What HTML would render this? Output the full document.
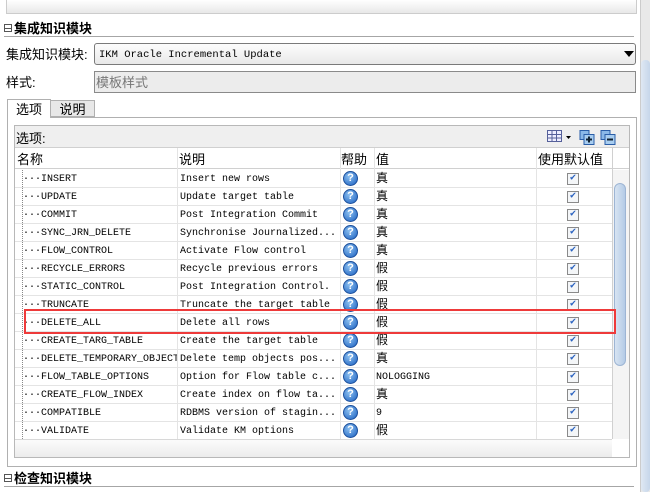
<!DOCTYPE html>
<html><head><meta charset="utf-8"><style>
*{box-sizing:border-box;margin:0;padding:0}
body{width:650px;height:492px;overflow:hidden;background:#fff;position:relative;font-family:"Liberation Sans","Noto Sans CJK SC",sans-serif;font-size:12px;color:#000;line-height:1.15}
.a{position:absolute}
.m{font-family:"Liberation Mono","Noto Sans CJK SC",monospace;font-size:10px}
.row{position:absolute;left:15px;width:597px;height:18px;border-bottom:1px solid #e4e4e4}
.row span{position:absolute;top:4px;white-space:nowrap;line-height:11px}
.row span.c{font-size:12px;top:2px;line-height:14px}
.q{position:absolute;left:328px;top:1px;width:15px;height:15px;border-radius:50%;background:radial-gradient(circle at 40% 35%,#8cc0f0,#1a5fc0);border:1px solid #1b4f9c;color:#fff;font:bold 11px "Liberation Sans",sans-serif;text-align:center;line-height:13px}
.cb{position:absolute;left:552px;top:3px;width:12px;height:12px;border:1px solid #8a8a8a;background:#f4f6f8;color:#2a62c0;font-size:10px;line-height:10px;text-align:center}
.vl{position:absolute;top:148px;height:291px;border-left:1px solid #e4e4e4}
.h{line-height:15px;font-size:13px}
</style></head><body>
<div class="a" style="left:6px;top:0;width:631px;height:14px;background:linear-gradient(#fff,#e8e8e8);border:1px solid #ccc;border-top:none"></div>
<div class="a" style="left:640px;top:0;width:10px;height:492px;background:#e9e9e9;border-left:1px solid #ccc"></div>
<div class="a" style="left:641px;top:60px;width:9px;height:432px;background:linear-gradient(90deg,#dfe8f3,#c6d6ea);border-radius:4px"></div>
<div class="a" style="left:4px;top:24px;width:8px;height:8px;border:1px solid #555"></div>
<div class="a" style="left:5px;top:28px;width:6px;border-top:1px solid #555"></div>
<div class="a h" style="left:14px;top:21px;font-weight:bold">集成知识模块</div>
<div class="a" style="left:4px;top:36px;width:630px;border-top:1px solid #a6a6a6"></div>
<div class="a h" style="left:6px;top:47px">集成知识模块:</div>
<div class="a m" style="left:94px;top:43px;width:542px;height:22px;border:1px solid #7a7a7a;border-radius:3px;background:linear-gradient(#fcfcfc,#e9e9e9);padding:5px 4px;font-size:10.5px;line-height:12px">IKM Oracle Incremental Update</div>
<div class="a" style="left:624px;top:51px;border-left:5px solid transparent;border-right:5px solid transparent;border-top:6px solid #000"></div>
<div class="a h" style="left:6px;top:75px">样式:</div>
<div class="a h" style="left:94px;top:71px;width:542px;height:22px;border:1px solid #8a8a8a;background:#ececec;color:#777;padding:3px 1px">模板样式</div>
<div class="a h" style="left:7px;top:99px;width:44px;height:19px;background:#fff;border:1px solid #b0b0b0;border-bottom:none;z-index:2;text-align:center;padding-top:2px">选项</div>
<div class="a h" style="left:50px;top:100px;width:45px;height:17px;background:#e8e8e8;border:1px solid #b0b0b0;text-align:center;padding-top:1px">说明</div>
<div class="a" style="left:7px;top:117px;width:630px;height:350px;border:1px solid #b0b0b0"></div>
<div class="a" style="left:14px;top:125px;width:616px;height:333px;border:1px solid #b8b8b8"></div>
<div class="a" style="left:15px;top:126px;width:614px;height:22px;background:#efefef;border-bottom:1px solid #d0d0d0"></div>
<div class="a h" style="left:16px;top:131px">选项:</div>
<svg class="a" style="left:546px;top:129px" width="80" height="18">
<rect x="1.5" y="1.5" width="14" height="11" fill="#eef" stroke="#55609a"/>
<path d="M1.5 5.5H15.5M1.5 9H15.5M6 1.5V12.5M10.5 1.5V12.5" stroke="#55609a"/>
<path d="M20 7h5l-2.5 3z" fill="#000"/>
<rect x="34" y="1.5" width="9" height="9" fill="#8ab8e8" stroke="#2a5ea8"/>
<rect x="38" y="5.5" width="10" height="10" fill="#a8cdf0" stroke="#2a5ea8"/>
<path d="M43 7.5v6M40 10.5h6" stroke="#123" stroke-width="2"/>
<rect x="55" y="1.5" width="9" height="9" fill="#8ab8e8" stroke="#2a5ea8"/>
<rect x="59" y="5.5" width="10" height="10" fill="#a8cdf0" stroke="#2a5ea8"/>
<path d="M61 10.5h6" stroke="#123" stroke-width="2"/>
</svg>
<div class="a" style="left:15px;top:148px;width:614px;height:21px;background:#fff;border-bottom:1px solid #d0d0d0"></div>
<div class="a h" style="left:17px;top:152px">名称</div>
<div class="a h" style="left:179px;top:152px">说明</div>
<div class="a h" style="left:341px;top:152px">帮助</div>
<div class="a h" style="left:376px;top:152px">值</div>
<div class="a h" style="left:538px;top:152px">使用默认值</div>
<div class="vl" style="left:177px"></div><div class="vl" style="left:340px"></div><div class="vl" style="left:374px"></div><div class="vl" style="left:536px"></div><div class="vl" style="left:612px;border-color:#d0d0d0"></div>
<div class="a" style="left:613px;top:170px;width:16px;height:269px;background:#f4f4f4"></div>
<div class="a" style="left:614px;top:183px;width:12px;height:183px;border-radius:6px;background:linear-gradient(90deg,#d8e4f2,#b4cbe6);border:1px solid #9db5d4"></div>
<div class="a" style="left:22px;top:170px;height:269px;border-left:1px dotted #888"></div>
<div class="m" style="position:absolute;left:0;top:170px;width:650px">
<div class="row" style="top:0"><span style="left:8px">···INSERT</span><span style="left:165px">Insert new rows</span><div class="q">?</div><span class="c" style="left:361px">真</span><div class="cb">✔</div></div>
<div class="row" style="top:18px"><span style="left:8px">···UPDATE</span><span style="left:165px">Update target table</span><div class="q">?</div><span class="c" style="left:361px">真</span><div class="cb">✔</div></div>
<div class="row" style="top:36px"><span style="left:8px">···COMMIT</span><span style="left:165px">Post Integration Commit</span><div class="q">?</div><span class="c" style="left:361px">真</span><div class="cb">✔</div></div>
<div class="row" style="top:54px"><span style="left:8px">···SYNC_JRN_DELETE</span><span style="left:165px">Synchronise Journalized...</span><div class="q">?</div><span class="c" style="left:361px">真</span><div class="cb">✔</div></div>
<div class="row" style="top:72px"><span style="left:8px">···FLOW_CONTROL</span><span style="left:165px">Activate Flow control</span><div class="q">?</div><span class="c" style="left:361px">真</span><div class="cb">✔</div></div>
<div class="row" style="top:90px"><span style="left:8px">···RECYCLE_ERRORS</span><span style="left:165px">Recycle previous errors</span><div class="q">?</div><span class="c" style="left:361px">假</span><div class="cb">✔</div></div>
<div class="row" style="top:108px"><span style="left:8px">···STATIC_CONTROL</span><span style="left:165px">Post Integration Control.</span><div class="q">?</div><span class="c" style="left:361px">假</span><div class="cb">✔</div></div>
<div class="row" style="top:126px"><span style="left:8px">···TRUNCATE</span><span style="left:165px">Truncate the target table</span><div class="q">?</div><span class="c" style="left:361px">假</span><div class="cb">✔</div></div>
<div class="row" style="top:144px"><span style="left:8px">···DELETE_ALL</span><span style="left:165px">Delete all rows</span><div class="q">?</div><span class="c" style="left:361px">假</span><div class="cb">✔</div></div>
<div class="row" style="top:162px"><span style="left:8px">···CREATE_TARG_TABLE</span><span style="left:165px">Create the target table</span><div class="q">?</div><span class="c" style="left:361px">假</span><div class="cb">✔</div></div>
<div class="row" style="top:180px"><span style="left:8px;width:154px;overflow:hidden">···DELETE_TEMPORARY_OBJECTS</span><span style="left:165px">Delete temp objects pos...</span><div class="q">?</div><span class="c" style="left:361px">真</span><div class="cb">✔</div></div>
<div class="row" style="top:198px"><span style="left:8px">···FLOW_TABLE_OPTIONS</span><span style="left:165px">Option for Flow table c...</span><div class="q">?</div><span style="left:361px">NOLOGGING</span><div class="cb">✔</div></div>
<div class="row" style="top:216px"><span style="left:8px">···CREATE_FLOW_INDEX</span><span style="left:165px">Create index on flow ta...</span><div class="q">?</div><span class="c" style="left:361px">真</span><div class="cb">✔</div></div>
<div class="row" style="top:234px"><span style="left:8px">···COMPATIBLE</span><span style="left:165px">RDBMS version of stagin...</span><div class="q">?</div><span style="left:361px">9</span><div class="cb">✔</div></div>
<div class="row" style="top:252px"><span style="left:8px">···VALIDATE</span><span style="left:165px">Validate KM options</span><div class="q">?</div><span class="c" style="left:361px">假</span><div class="cb">✔</div></div>
</div>
<div class="a" style="left:24px;top:309px;width:592px;height:25px;border:2px solid #ee3a3a"></div>
<div class="a" style="left:15px;top:439px;width:597px;height:18px;background:linear-gradient(#fbfbfb,#ececec);border-top:1px solid #d8d8d8"></div>
<div class="a" style="left:4px;top:474px;width:8px;height:8px;border:1px solid #555"></div>
<div class="a" style="left:5px;top:478px;width:6px;border-top:1px solid #555"></div>
<div class="a h" style="left:14px;top:471px;font-weight:bold">检查知识模块</div>
<div class="a" style="left:4px;top:486px;width:630px;border-top:1px solid #a6a6a6"></div>
</body></html>
